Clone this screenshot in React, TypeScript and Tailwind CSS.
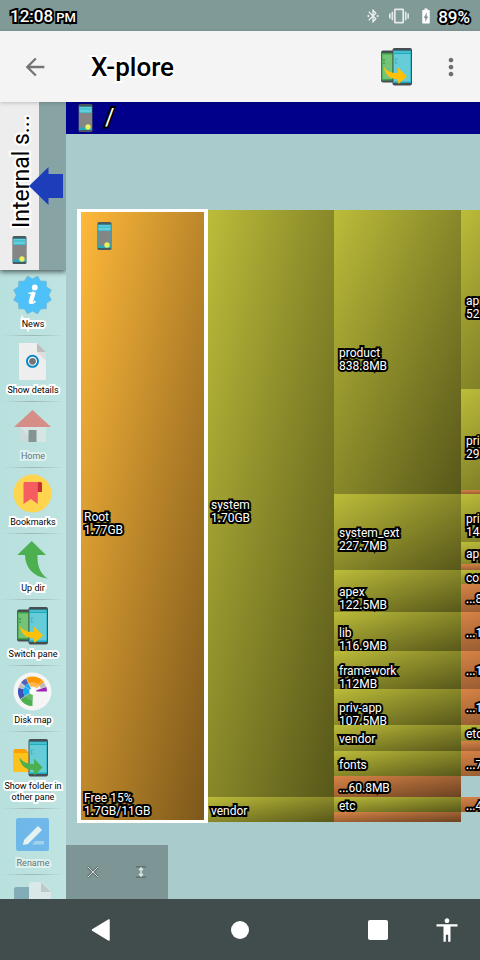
import React from "react";
import {
  MdAccessibility,
  MdArrowBack,
  MdBatteryChargingFull,
  MdBluetoothConnected,
  MdMoreVert,
  MdVibration,
} from "react-icons/md";

const DARK_OUTLINE = "text-white [-webkit-text-stroke:4px_black] [paint-order:stroke_fill]";
const LIGHT_OUTLINE = "text-black [-webkit-text-stroke:4px_white] [paint-order:stroke_fill]";

/* ---------- icons ---------- */

function PhoneIcon() {
  return (
    <svg width="15" height="28" viewBox="0 0 15 28" aria-hidden="true" className="shrink-0">
      <rect x="0.5" y="0" width="14" height="28" rx="1.5" fill="#4a5b60" />
      <rect x="1" y="2.5" width="13" height="23.5" fill="#26a8c0" />
      <rect x="1.5" y="3" width="12" height="5.5" fill="#63cfdc" />
      <rect x="1.5" y="4.5" width="12" height="1" fill="#35b3c7" />
      <rect x="1.5" y="9" width="12" height="14.500" fill="#858585" />
      <circle cx="10" cy="23" r="2.7" fill="#e8f05a" />
    </svg>
  );
}

function Icon({ children, faded = false }: { children: React.ReactNode; faded?: boolean }) {
  return (
    <svg width="40" height="40" viewBox="0 0 40 40" aria-hidden="true" className={faded ? "shrink-0 opacity-60" : "shrink-0"}>
      {children}
    </svg>
  );
}

function polar(cx: number, cy: number, r: number, deg: number) {
  const a = ((deg - 90) * Math.PI) / 180;
  return `${(cx + r * Math.cos(a)).toFixed(2)} ${(cy + r * Math.sin(a)).toFixed(2)}`;
}

function sector(r0: number, r1: number, from: number, to: number) {
  const c = 19.5;
  return `M${polar(c, c, r0, from)}L${polar(c, c, r1, from)}A${r1} ${r1} 0 0 1 ${polar(c, c, r1, to)}L${polar(c, c, r0, to)}A${r0} ${r0} 0 0 0 ${polar(c, c, r0, from)}Z`;
}

const starPoints = Array.from({ length: 24 }, (_, i) => polar(19.5, 19, i % 2 ? 16.3 : 19.6, i * 15 + 15)).join(" ");

function NewsIcon() {
  return (
    <Icon>
      <polygon points={starPoints} fill="#4fc1f9" stroke="#7aa9b8" strokeWidth="0.4" />
      <circle cx="21.800" cy="11.500" r="2.900" fill="#fff" />
      <path d="M15.5 17.300h6.300l-2.600 8.700c-.4 1.600.9 1.300 3.200-.9" fill="none" stroke="#fff" strokeWidth="1.500" />
      <path d="M20 17.500l-2.400 8.500" stroke="#fff" strokeWidth="4" strokeLinecap="round" />
    </Icon>
  );
}

function DetailsIcon() {
  return (
    <Icon>
      <path d="M7 1h17l9 9v27a1 1 0 0 1-1 1H7a1 1 0 0 1-1-1V2a1 1 0 0 1 1-1z" fill="#eeeeee" />
      <path d="M24 10h9v9z" fill="#dedede" />
      <path d="M24 1l9 9h-9z" fill="#bdbdbd" />
      <circle cx="19.500" cy="19.300" r="5.500" fill="#fff" stroke="#0a86cc" strokeWidth="2" />
      <circle cx="19.500" cy="19.300" r="3.400" fill="#757575" />
    </Icon>
  );
}

function HomeIcon() {
  return (
    <Icon faded>
      <path d="M7 17h26v17H7z" fill="#e8e8e8" />
      <path d="M7 19l15 15H7z" fill="#d4d8d8" />
      <path d="M15.500 22h8v12h-8z" fill="#616161" />
      <path d="M19.500 2L38 19H1z" fill="#e8584f" />
    </Icon>
  );
}

function BookmarksIcon() {
  return (
    <Icon>
      <circle cx="19.500" cy="19.500" r="19" fill="#ffd54f" />
      <path d="M24 8h3.500a1.500 1.500 0 0 1 1.500 1.500V18h-5z" fill="#c62f33" />
      <path d="M11.500 8H26a1.500 1.500 0 0 0-1.200 1.500V30l-7-5-7.300 5V9.500A1.500 1.500 0 0 1 11.500 8z" fill="#f55d60" />
    </Icon>
  );
}

function UpIcon() {
  return (
    <Icon>
      <path d="M18.700 1L4.300 15H12C12 27 20 37 34.700 38.500 27.500 34 24 26 24.500 15H33z" fill="#4caf50" />
    </Icon>
  );
}

function BigPhone() {
  return (
    <>
      <rect x="15.500" y="1" width="19.500" height="37.500" rx="2" fill="#454f52" />
      <rect x="16" y="3.500" width="18" height="32.500" fill="#1fa9bd" />
      <rect x="17" y="4" width="16.500" height="2" fill="#48bfcf" />
      <rect x="17" y="7" width="16.500" height="27.500" fill="#66cdd8" />
      <path d="M18.500 11v6M20 11v2M20 15v2" stroke="#4db3c0" strokeWidth="1" />
    </>
  );
}

function SwitchPaneIcon() {
  return (
    <Icon>
      <rect x="4" y="3.500" width="16" height="32" rx="2" fill="#454f52" />
      <rect x="4.500" y="6" width="12" height="27.500" fill="#3fa245" />
      <rect x="5.500" y="7.500" width="10" height="24.500" fill="#73c476" />
      <path d="M7 12v5" stroke="#51a455" strokeWidth="2" strokeDasharray="2 1" />
      <BigPhone />
      <path d="M7 20c3 4.500 8 6.500 14 6v-5.500l9 9-8.500 7.500-1-5C13 32.500 7.500 27 7 20z" fill="#ffc107" />
    </Icon>
  );
}

function DiskMapIcon() {
  return (
    <Icon>
      <circle cx="19.500" cy="19.500" r="19" fill="#f5f5f5" />
      <path d={sector(3, 14.500, 180, 238)} fill="#4caf50" />
      <path d={sector(3, 9, 180, 238)} fill="#66bb6a" />
      <path d={sector(9, 14.500, 238, 285)} fill="#3f51b5" />
      <path d={sector(9, 14.500, 285, 308)} fill="#bdbdbd" />
      <path d={sector(9, 14.500, 308, 335)} fill="#5361bd" />
      <path d={sector(3, 9, 238, 335)} fill="#18aaf3" />
      <path d={sector(6, 15, 335, 410)} fill="#ff9800" />
      <path d={sector(5, 9, 335, 410)} fill="#ffb74d" />
      <path d={sector(9, 14.500, 50, 70)} fill="#bdbdbd" />
      <path d={sector(4, 14.500, 72, 90)} fill="#9c27b0" />
      <path d="M19.500 19.500L6 11M19.500 19.500L13 6M19.500 19.500L29 8.500M19.500 19.500L6 28" stroke="#f5f5f5" strokeWidth="0.400" />
      <circle cx="19.500" cy="19.500" r="3" fill="#fff" />
    </Icon>
  );
}

function ShowFolderIcon() {
  return (
    <Icon>
      <path d="M2 11h10l3 3v20H2a1.500 1.500 0 0 1-1.500-1.500v-20A1.500 1.500 0 0 1 2 11z" fill="#ff9f00" />
      <path d="M.5 15H16v19H2a1.500 1.500 0 0 1-1.500-1.500z" fill="#ffc21c" />
      <BigPhone />
      <path d="M6.500 19.500c3 4.500 8 6.500 14.500 6.500v-5.500l8.500 9-8 8-1-5.500C12.500 32 7 27 6.500 19.500z" fill="#4caf50" />
    </Icon>
  );
}

function RenameIcon() {
  return (
    <Icon faded>
      <rect x="3" y="3" width="33" height="33" rx="2.500" fill="#3d9df0" />
      <path d="M22 26h9v3.500H19z" fill="#90c8f8" />
      <path d="M10 30l1-5 14-14 4 4-14 14z" fill="#fff" />
    </Icon>
  );
}

function CopyIcon() {
  return (
    <Icon faded>
      <rect x="1" y="6" width="24" height="30" rx="2" fill="#5f8b9c" />
      <path d="M17 1h12l9 9v28H16V2z" fill="#eeeeee" />
      <path d="M28 1l10 10H28z" fill="#bdbdbd" />
    </Icon>
  );
}

/* ---------- side toolbar ---------- */

const tools = [
  { label: "News", icon: <NewsIcon /> },
  { label: "Show details", icon: <DetailsIcon /> },
  { label: "Home", icon: <HomeIcon />, disabled: true },
  { label: "Bookmarks", icon: <BookmarksIcon /> },
  { label: "Up dir", icon: <UpIcon /> },
  { label: "Switch pane", icon: <SwitchPaneIcon /> },
  { label: "Disk map", icon: <DiskMapIcon /> },
  { label: "Show folder in other pane", icon: <ShowFolderIcon /> },
  { label: "Rename", icon: <RenameIcon />, disabled: true },
  { label: "Copy", icon: <CopyIcon />, disabled: true },
];

function ToolButton({ label, icon, disabled }: { label: string; icon: React.ReactNode; disabled?: boolean }) {
  return (
    <li className="shrink-0">
      <button disabled={disabled} className="flex w-full flex-col items-center gap-[3px] pt-1.5 pb-[5px]">
        {icon}
        <span className={`${LIGHT_OUTLINE} px-1 text-[9px] leading-[11px] ${disabled ? "opacity-50" : ""}`}>{label}</span>
      </button>
      <div className="mx-0.5 h-px bg-linear-to-r from-transparent via-[#9bb5b3] to-transparent" />
    </li>
  );
}

function SidePanel() {
  return (
    <aside className="flex w-[66px] shrink-0 flex-col overflow-hidden bg-linear-to-r from-[#b8e0dd] to-[#bfe4e2]">
      <div className="relative z-10 flex h-[168px] shrink-0 bg-[#88a3a3] shadow-[0_2px_5px_rgba(0,0,0,0.6)]">
        <button className="flex w-[39px] flex-col items-center justify-end gap-2 bg-[#ededed] pb-1.5">
          <span className={`${LIGHT_OUTLINE} ml-1 rotate-180 text-[23px] leading-6 whitespace-nowrap [writing-mode:vertical-rl]`}>
            Internal s...
          </span>
          <PhoneIcon />
        </button>
        <svg width="34" height="38" viewBox="0 0 34 38" aria-hidden="true" className="absolute top-[65px] right-[3px]">
          <path d="M0 19L19.500 0v7H34v24H19.500v7z" fill="#1e3db8" />
        </svg>
      </div>
      <ul className="flex min-h-0 flex-1 flex-col overflow-hidden">
        {tools.map((t) => (
          <ToolButton key={t.label} {...t} />
        ))}
      </ul>
    </aside>
  );
}

/* ---------- disk map ---------- */

type Kind = "dir" | "files" | "gap";
type Cell = { kind: Kind; size: number; name?: string; bytes?: string };

const fills: Record<Kind, string> = {
  dir: "bg-linear-to-br from-[#bcbc3a] to-[#58581a]",
  files: "bg-linear-to-br from-[#d88446] to-[#6c4222]",
  gap: "",
};

const level1: Cell[] = [
  { kind: "dir", size: 587, name: "system", bytes: "1.70GB" },
  { kind: "dir", size: 25, name: "vendor" },
];

const level2: Cell[] = [
  { kind: "dir", size: 284, name: "product", bytes: "838.8MB" },
  { kind: "dir", size: 76, name: "system_ext", bytes: "227.7MB" },
  { kind: "dir", size: 42, name: "apex", bytes: "122.5MB" },
  { kind: "dir", size: 39, name: "lib", bytes: "116.9MB" },
  { kind: "dir", size: 38, name: "framework", bytes: "112MB" },
  { kind: "dir", size: 36, name: "priv-app", bytes: "107.5MB" },
  { kind: "dir", size: 26, name: "vendor" },
  { kind: "dir", size: 25, name: "fonts" },
  { kind: "files", size: 21, name: "...60.8MB" },
  { kind: "dir", size: 15, name: "etc" },
  { kind: "files", size: 10 },
];

const level3: Cell[] = [
  { kind: "dir", size: 179, name: "app", bytes: "521MB" },
  { kind: "dir", size: 101, name: "priv-app", bytes: "298MB" },
  { kind: "files", size: 4 },
  { kind: "dir", size: 48, name: "priv-app", bytes: "144MB" },
  { kind: "dir", size: 22, name: "app" },
  { kind: "files", size: 6 },
  { kind: "dir", size: 14, name: "com" },
  { kind: "files", size: 28, name: "...82MB" },
  { kind: "files", size: 39, name: "...116MB" },
  { kind: "files", size: 38, name: "...112MB" },
  { kind: "files", size: 36, name: "...107MB" },
  { kind: "dir", size: 16, name: "etc" },
  { kind: "files", size: 10 },
  { kind: "files", size: 25, name: "...74MB" },
  { kind: "gap", size: 21 },
  { kind: "files", size: 15, name: "...44MB" },
  { kind: "gap", size: 10 },
];

function CellLabel({ name, bytes }: { name?: string; bytes?: string }) {
  return (
    <div className={`${DARK_OUTLINE} h-2.5 text-[12px] leading-[13px] whitespace-nowrap`}>
      <div>{name}</div>
      {bytes && <div>{bytes}</div>}
    </div>
  );
}

function Column({ cells, className }: { cells: Cell[]; className: string }) {
  return (
    <div className={`flex shrink-0 flex-col ${className}`}>
      {cells.map((c, i) => (
        <div
          key={i}
          className={`flex min-h-0 basis-0 items-center overflow-hidden ${fills[c.kind]}`}
          style={{ flexGrow: c.size }}
        >
          <CellLabel name={c.name} bytes={c.bytes} />
        </div>
      ))}
    </div>
  );
}

function DiskMap() {
  return (
    <div className="mt-[76px] mb-[77px] ml-[11px] flex min-h-0 flex-1">
      <div className="relative -my-px flex w-[131px] shrink-0 items-center border-x-4 border-y-3 border-white bg-linear-to-br from-[#ffb93a] to-[#7d581b] pl-[3px]">
        <div className="absolute top-[10px] left-4">
          <PhoneIcon />
        </div>
        <CellLabel name="Root" bytes="1.77GB" />
        <div className={`${DARK_OUTLINE} absolute bottom-0.5 left-[3px] text-[12px] leading-[13px]`}>
          <div>Free 15%</div>
          <div>1.7GB/11GB</div>
        </div>
      </div>
      <Column cells={level1} className="w-[126px] *:pl-[3px]" />
      <Column cells={level2} className="w-[127px] *:pl-[5px]" />
      <Column cells={level3} className="w-[127px] *:pl-[5px]" />
    </div>
  );
}

/* ---------- screen ---------- */

export default function App() {
  return (
    <div className="flex h-screen flex-col overflow-hidden bg-[#aacbcc] font-[Roboto,sans-serif]">
      <div className="flex h-[31px] shrink-0 items-center justify-between bg-[#809a98] px-2.5 text-white">
        <div className={`${DARK_OUTLINE} pt-0.5 text-[17px] leading-5 font-medium`}>
          12:08<span className="ml-[3px] text-[13px]">PM</span>
        </div>
        <div className="flex items-center">
          <MdBluetoothConnected className="mr-2 size-4 opacity-85" />
          <MdVibration className="mr-2 size-5 opacity-80" />
          <MdBatteryChargingFull className="mr-[3px] size-[18px]" />
          <span className={`${DARK_OUTLINE} pt-0.5 text-[17px] leading-5 font-medium`}>89%</span>
        </div>
      </div>

      <header className="relative z-20 flex h-[71px] shrink-0 items-center bg-[#f4f4f4] pr-[15px] pl-[21px] shadow-[0_1px_4px_rgba(0,0,0,0.2)]">
        <button aria-label="Back">
          <MdArrowBack className="size-7 text-[#757575]" />
        </button>
        <h1 className={`${LIGHT_OUTLINE} ml-[42px] flex-1 text-[26px] leading-8 font-medium`}>X-plore</h1>
        <button aria-label="Switch pane" className="mr-5">
          <SwitchPaneIcon />
        </button>
        <button aria-label="More options">
          <MdMoreVert className="size-7 text-[#6e6e6e]" />
        </button>
      </header>

      <main className="flex min-h-0 flex-1">
        <SidePanel />
        <section className="relative flex min-w-0 flex-1 flex-col overflow-hidden">
          <div className="flex h-8 shrink-0 items-center gap-3 bg-[#00008b] pl-3">
            <PhoneIcon />
            <span className={`${DARK_OUTLINE} text-[23px] leading-8`}>/</span>
          </div>
          <DiskMap />
          <div className="absolute bottom-0 left-0 flex h-[54px] items-center bg-[#7d9594] px-[3px]">
            <button aria-label="Close" className="flex w-12 justify-center">
              <svg width="12" height="12" viewBox="0 0 12 12">
                <path d="M1 1l10 10M11 1L1 11" stroke="#5f7371" strokeWidth="2.500" />
                <path d="M1 1l10 10M11 1L1 11" stroke="#d5dddc" strokeWidth="1" />
              </svg>
            </button>
            <button aria-label="Fit height" className="flex w-12 justify-center">
              <svg width="12" height="12" viewBox="0 0 12 12">
                <path d="M1 .8h10M1 11.200h10" stroke="#5f7371" strokeWidth="1.600" />
                <path d="M6 1.500v9M4 4l2-2 2 2M4 8l2 2 2-2" fill="none" stroke="#dfe6e5" strokeWidth="1.500" />
              </svg>
            </button>
          </div>
        </section>
      </main>

      <nav className="flex h-[61px] shrink-0 items-center bg-[#404d4c] pr-[9px] pl-[77px] text-white">
        <div className="flex flex-1 justify-between">
          <button aria-label="Back" className="flex size-12 items-center justify-center">
            <svg width="20" height="24" viewBox="0 0 20 24">
              <path d="M1.500 12L18 2v20z" fill="#fff" stroke="#fff" strokeWidth="1.500" strokeLinejoin="round" />
            </svg>
          </button>
          <button aria-label="Home" className="flex size-12 items-center justify-center">
            <span className="size-[18px] rounded-full bg-white" />
          </button>
          <button aria-label="Recent apps" className="flex size-12 items-center justify-center">
            <span className="size-5 rounded-xs bg-white" />
          </button>
        </div>
        <button aria-label="Accessibility" className="ml-[21px] flex size-12 items-center justify-center">
          <MdAccessibility className="size-7" />
        </button>
      </nav>
    </div>
  );
}
